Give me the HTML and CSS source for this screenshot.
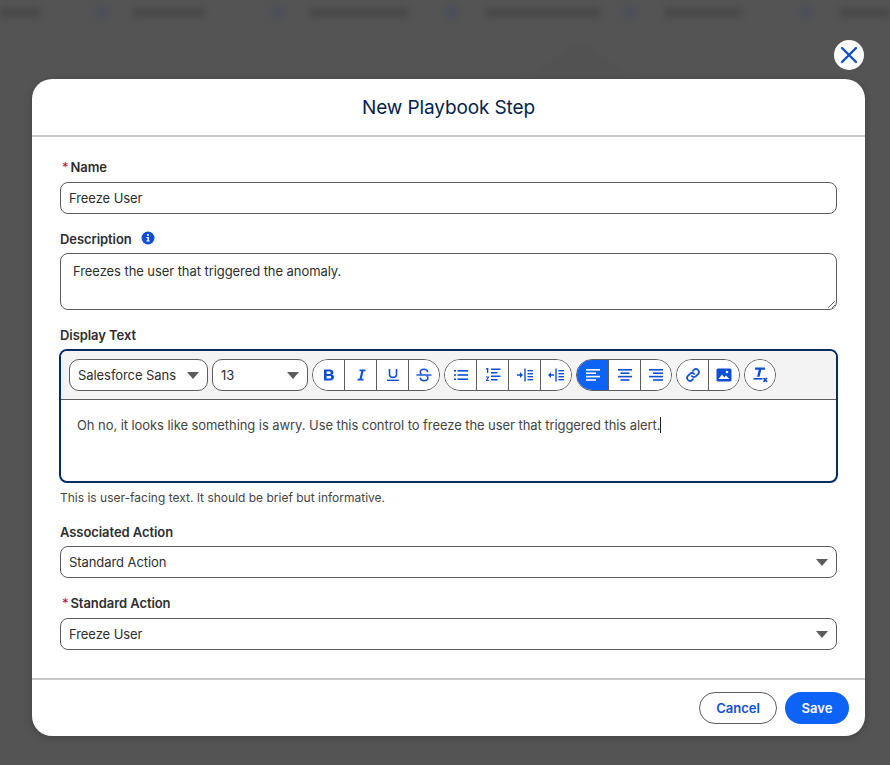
FILE: index.html
```html
<!DOCTYPE html>
<html lang="en">
<head>
    <meta charset="UTF-8">
    <meta name="viewport" content="width=device-width, initial-scale=1.0">
    <title>New Playbook Step</title>
    <link rel="stylesheet" href="styles.css">
</head>
<body>
    <!-- blurred page behind the modal -->
    <div class="backdrop-nav">
        <span class="nav-text nav-first"></span>
        <span class="nav-dot"></span><span class="nav-text nav-a"></span>
        <span class="nav-dot"></span><span class="nav-text nav-b"></span>
        <span class="nav-dot"></span><span class="nav-text nav-c"></span>
        <span class="nav-dot"></span><span class="nav-text nav-d"></span>
        <span class="nav-dot"></span><span class="nav-text nav-e"></span>
    </div>
    <div class="backdrop-shape"></div>

    <button class="close-btn" type="button" aria-label="Close">
        <svg width="18" height="18" viewBox="0 0 18 18"><path d="M2 2 L16 16 M16 2 L2 16" stroke="#0f4fd6" stroke-width="2.4" stroke-linecap="round" fill="none"/></svg>
    </button>

    <div class="modal">
        <header class="modal-header">
            <h1>New Playbook Step</h1>
        </header>

        <form class="modal-body">
            <div class="field">
                <label class="field-label required" for="name"><abbr>*</abbr>Name</label>
                <input class="text-input" type="text" id="name" value="Freeze User">
            </div>

            <div class="field">
                <label class="field-label" for="description">Description
                    <svg class="info-icon" width="14" height="14" viewBox="0 0 14 14"><circle cx="7" cy="7" r="6.5" fill="#0f4fd6"/><rect x="6" y="3" width="2" height="2" rx="1" fill="#fff"/><path d="M5.4 6h2.5v3.4h.8v1H5.4v-1h1V7h-1z" fill="#fff"/></svg>
                </label>
                <textarea class="text-area" id="description">Freezes the user that triggered the anomaly.</textarea>
            </div>

            <div class="field field-help">
                <label class="field-label">Display Text</label>
                <div class="editor">
                    <div class="toolbar">
                        <div class="select-wrap font-select">
                            <select class="tool-select"><option>Salesforce Sans</option></select>
                        </div>
                        <div class="select-wrap size-select">
                            <select class="tool-select"><option>13</option></select>
                        </div>

                        <div class="btn-group">
                            <button type="button" class="tool-btn"><svg width="14" height="14" viewBox="0 0 14 14"><path fill-rule="evenodd" d="M2 1.500h5.800c2.200 0 3.600 1.100 3.600 2.900 0 1-.5 1.800-1.400 2.200 1.200.4 2 1.300 2 2.600 0 1.900-1.500 3.300-3.800 3.300H2zM4.600 3.500v2.600h2.800c.8 0 1.300-.5 1.300-1.300s-.5-1.300-1.300-1.300zM4.600 8v2.600h3.200c.9 0 1.400-.5 1.400-1.300S8.700 8 7.800 8z" fill="#0f4fd6"/></svg></button>
                            <button type="button" class="tool-btn"><svg width="14" height="14" viewBox="0 0 14 14"><path d="M5.500 1.500h6v1.800H9.500L7.700 10.700h1.900v1.800H3.500V10.700h2L7.300 3.300H5.500z" fill="#0f4fd6"/></svg></button>
                            <button type="button" class="tool-btn"><svg width="14" height="14" viewBox="0 0 14 14"><path d="M3.500 1v5.200c0 2 1.500 3.200 3.500 3.200s3.500-1.200 3.500-3.200V1" stroke="#0f4fd6" stroke-width="1.600" fill="none"/><rect x="1" y="11.600" width="12" height="1.400" fill="#0f4fd6"/></svg></button>
                            <button type="button" class="tool-btn"><svg width="16" height="16" viewBox="0 0 16 16"><path d="M11.800 5.200C11.500 3.200 10 2.300 8 2.300S4.300 3.400 4.300 5.200c0 1 .5 1.700 1.300 2.100M10.700 8.700c.8.500 1.200 1.200 1.200 2.100 0 1.900-1.700 2.900-3.900 2.900s-3.600-1-3.900-3" stroke="#0f4fd6" stroke-width="1.500" fill="none"/><rect x="0.500" y="7.300" width="15" height="1.400" fill="#0f4fd6"/></svg></button>
                        </div>

                        <div class="btn-group">
                            <button type="button" class="tool-btn"><svg width="16" height="14" viewBox="0 0 16 14"><g fill="#0f4fd6"><rect x="1" y="2" width="2" height="1.600"/><rect x="1" y="6.200" width="2" height="1.600"/><rect x="1" y="10.400" width="2" height="1.600"/><rect x="4.500" y="2" width="10.500" height="1.600"/><rect x="4.500" y="6.200" width="10.500" height="1.600"/><rect x="4.500" y="10.400" width="10.500" height="1.600"/></g></svg></button>
                            <button type="button" class="tool-btn"><svg width="16" height="16" viewBox="0 0 16 16"><g fill="#0f4fd6"><path d="M2 1h1.300v5H2V2.400H1V1.600z"/><path d="M1 9.500h3v1.100L2.300 13H4v1H1v-1l1.800-2.400H1z"/><rect x="6" y="1.500" width="9.500" height="1.500"/><rect x="6" y="5" width="6.500" height="1.500"/><rect x="6" y="8.500" width="9.500" height="1.500"/><rect x="6" y="12" width="6.500" height="1.500"/></g></svg></button>
                            <button type="button" class="tool-btn"><svg width="18" height="14" viewBox="0 0 18 14"><g fill="#0f4fd6"><path d="M1 6.200h3V4l3 3-3 3V7.800H1z"/><rect x="8.300" y="0.500" width="1.400" height="13"/><rect x="11.500" y="2" width="5.500" height="1.400"/><rect x="11.500" y="5" width="5.500" height="1.400"/><rect x="11.500" y="8" width="5.500" height="1.400"/><rect x="11.500" y="11" width="5.500" height="1.400"/></g></svg></button>
                            <button type="button" class="tool-btn"><svg width="18" height="14" viewBox="0 0 18 14"><g fill="#0f4fd6"><path d="M7 6.200H4V4L1 7l3 3V7.800h3z"/><rect x="8.300" y="0.500" width="1.400" height="13"/><rect x="11.500" y="2" width="5.500" height="1.400"/><rect x="11.500" y="5" width="5.500" height="1.400"/><rect x="11.500" y="8" width="5.500" height="1.400"/><rect x="11.500" y="11" width="5.500" height="1.400"/></g></svg></button>
                        </div>

                        <div class="btn-group">
                            <button type="button" class="tool-btn is-active"><svg width="16" height="14" viewBox="0 0 16 14"><g fill="#fff"><rect x="1" y="1" width="14" height="1.600"/><rect x="1" y="4.400" width="10" height="1.600"/><rect x="1" y="7.800" width="14" height="1.600"/><rect x="1" y="11.200" width="10" height="1.600"/></g></svg></button>
                            <button type="button" class="tool-btn"><svg width="16" height="14" viewBox="0 0 16 14"><g fill="#0f4fd6"><rect x="1" y="1" width="14" height="1.600"/><rect x="3.500" y="4.400" width="9" height="1.600"/><rect x="1" y="7.800" width="14" height="1.600"/><rect x="3.500" y="11.200" width="9" height="1.600"/></g></svg></button>
                            <button type="button" class="tool-btn"><svg width="16" height="14" viewBox="0 0 16 14"><g fill="#0f4fd6"><rect x="1" y="1" width="14" height="1.600"/><rect x="5" y="4.400" width="10" height="1.600"/><rect x="1" y="7.800" width="14" height="1.600"/><rect x="5" y="11.200" width="10" height="1.600"/></g></svg></button>
                        </div>

                        <div class="btn-group">
                            <button type="button" class="tool-btn"><svg width="16" height="16" viewBox="0 0 16 16"><g stroke="#0f4fd6" stroke-width="1.700" fill="none" stroke-linecap="round"><path d="M6.800 9.200a2.900 2.900 0 0 0 4.200 0l2.300-2.300a3 3 0 0 0-4.200-4.200L8 3.800"/><path d="M9.200 6.800a2.900 2.900 0 0 0-4.200 0L2.700 9.100a3 3 0 0 0 4.200 4.200L8 12.200"/></g></svg></button>
                            <button type="button" class="tool-btn"><svg width="16" height="14" viewBox="0 0 16 14"><rect x="0.500" y="0.500" width="15" height="13" rx="1.500" fill="#0f4fd6"/><path d="M2.500 11l3.500-4.500 2.300 2.700 1.700-1.800 3.500 3.600z" fill="#fff"/><circle cx="11" cy="4" r="1.300" fill="#fff"/></svg></button>
                        </div>

                        <div class="btn-group">
                            <button type="button" class="tool-btn"><svg width="18" height="18" viewBox="0 0 18 18"><g fill="#0f4fd6"><path d="M4 1.500h10v2.200h-3.800L8.600 10.800H6.100L7.700 3.700H4z"/><rect x="2.500" y="12" width="9" height="1.600"/></g><path d="M12.500 12l3.500 3.800M16 12l-3.500 3.800" stroke="#0f4fd6" stroke-width="1.700" fill="none"/></svg></button>
                        </div>
                    </div>
                    <div class="editor-body">
                        <p>Oh no, it looks like something is awry. Use this control to freeze the user that triggered this alert.<span class="caret"></span></p>
                    </div>
                </div>
                <div class="help-text">This is user-facing text. It should be brief but informative.</div>
            </div>

            <div class="field">
                <label class="field-label" for="action">Associated Action</label>
                <div class="select-wrap">
                    <select class="text-input" id="action"><option>Standard Action</option></select>
                </div>
            </div>

            <div class="field">
                <label class="field-label required" for="standard"><abbr>*</abbr>Standard Action</label>
                <div class="select-wrap">
                    <select class="text-input" id="standard"><option>Freeze User</option></select>
                </div>
            </div>
        </form>

        <footer class="modal-footer">
            <button type="button" class="btn btn-neutral">Cancel</button>
            <button type="button" class="btn btn-brand">Save</button>
        </footer>
    </div>
</body>
</html>
```

FILE: styles.css
```css
* {
    box-sizing: border-box;
}

body {
    margin: 0;
    height: 765px;
    overflow: hidden;
    position: relative;
    background: #545454;
    font-family: Inter, "Liberation Sans", sans-serif;
    font-size: 13px;
    letter-spacing: -0.07px;
    color: #2b2826;
    padding-top: 79px;
}

/* page behind the overlay */
.backdrop-nav {
    position: absolute;
    top: 6px;
    left: 0;
    right: 0;
    height: 12px;
    display: flex;
    align-items: center;
    filter: blur(3px);
}

.nav-text {
    height: 9px;
    background: #484848;
}

.nav-dot {
    width: 14px;
    height: 14px;
    border-radius: 50%;
    background: #4b4f59;
}

.nav-first { width: 40px; margin-right: 55px; }
.nav-a { width: 72px; margin-left: 24px; margin-right: 66px; }
.nav-b { width: 98px; margin-left: 25px; margin-right: 37px; }
.nav-c { width: 114px; margin-left: 27px; margin-right: 23px; }
.nav-d { width: 77px; margin-left: 28px; margin-right: 58px; }
.nav-e { width: 50px; margin-left: 26px; }

.backdrop-shape {
    position: absolute;
    left: 525px;
    top: 40px;
    width: 110px;
    height: 40px;
    background: #525252;
    clip-path: polygon(50% 0, 100% 100%, 0 100%);
    filter: blur(5px);
}

.close-btn {
    position: absolute;
    left: 834px;
    top: 40px;
    width: 30px;
    height: 30px;
    border: 0;
    border-radius: 50%;
    background: #fff;
    padding: 0;
    display: flex;
    align-items: center;
    justify-content: center;
}

.modal {
    position: relative;
    margin-left: 32px;
    width: 833px;
    height: 657px;
    background: #fff;
    border-radius: 20px;
    display: flex;
    flex-direction: column;
    box-shadow: 0 2px 8px rgba(0, 0, 0, 0.2);
    overflow: hidden;
}

.modal-header {
    height: 58px;
    border-bottom: 2px solid #c9c9c9;
    padding-top: 1px;
    display: flex;
    align-items: center;
    justify-content: center;
}

.modal-header h1 {
    margin: 0;
    font-size: 19px;
    font-weight: 400;
    letter-spacing: -0.12px;
    color: #03234d;
}

.modal-body {
    flex: 1;
    padding: 21px 28px 0;
}

.field {
    margin-bottom: 16px;
}

.field-help {
    margin-bottom: 18px;
}

.field-label {
    display: flex;
    align-items: center;
    height: 18px;
    margin-bottom: 5px;
    font-size: 13px;
    font-weight: 600;
    color: #2e2e2e;
}

.field-label.required {
    height: 19px;
    padding-bottom: 2px;
}

.field-label abbr {
    color: #ba0f4a;
    margin: 0 2px 0 2px;
    font-weight: 400;
}

.info-icon {
    margin-left: 9px;
    margin-top: -2px;
}

.text-input,
.text-area {
    display: block;
    width: 100%;
    border: 1px solid #5c5c5c;
    border-radius: 8px;
    background: #fff;
    font-family: inherit;
    font-size: 13px;
    letter-spacing: inherit;
    color: #2e2e2e;
    outline: none;
}

.text-input {
    height: 32px;
    padding: 0 8px;
    appearance: none;
}

.text-area {
    height: 57px;
    padding: 7px 12px;
    line-height: 20px;
    resize: vertical;
}

.select-wrap {
    position: relative;
}

.select-wrap::after {
    content: "";
    position: absolute;
    right: 9px;
    top: 13px;
    border-left: 6px solid transparent;
    border-right: 6px solid transparent;
    border-top: 7px solid #5c5c5c;
    pointer-events: none;
}

.editor {
    height: 134px;
    margin: 0 -1px;
    border: 2px solid #032d60;
    border-radius: 8px;
    overflow: hidden;
}

.toolbar {
    height: 49px;
    padding: 8px;
    display: flex;
    gap: 4px;
    background: #f3f3f3;
    border-bottom: 1px solid #5c5c5c;
}

.font-select { width: 139px; }
.size-select { width: 96px; }

.tool-select {
    display: block;
    width: 100%;
    height: 32px;
    padding: 0 8px;
    border: 1px solid #5c5c5c;
    border-radius: 10px;
    background: #fff;
    font-family: inherit;
    font-size: 13px;
    letter-spacing: inherit;
    color: #2e2e2e;
    appearance: none;
    outline: none;
}

.btn-group {
    display: flex;
    height: 32px;
    border: 1px solid #5c5c5c;
    border-radius: 16px;
    background: #fff;
    overflow: hidden;
}

.tool-btn {
    width: 32px;
    height: 30px;
    padding: 0;
    border: 0;
    border-left: 1px solid #5c5c5c;
    background: #fff;
    display: flex;
    align-items: center;
    justify-content: center;
}

.tool-btn:first-child {
    border-left: 0;
    width: 31px;
}

.tool-btn:last-child {
    width: 31px;
}

.tool-btn:only-child {
    width: 30px;
}

.tool-btn.is-active {
    background: #0d63f5;
}

.editor-body {
    padding: 16px;
    background: #fff;
}

.editor-body p {
    margin: 0;
    line-height: 18px;
    color: #444;
}

.caret {
    display: inline-block;
    width: 1px;
    height: 16px;
    background: #222;
    vertical-align: -3px;
}

.help-text {
    margin-top: 8px;
    font-size: 12px;
    line-height: 14px;
    letter-spacing: 0;
    color: #444;
}

.modal-footer {
    height: 58px;
    border-top: 2px solid #c9c9c9;
    padding: 12px 16px;
    display: flex;
    justify-content: flex-end;
    gap: 8px;
}

.btn {
    height: 32px;
    border-radius: 16px;
    font-family: inherit;
    font-size: 13px;
    font-weight: 600;
    padding: 0;
}

.btn-neutral {
    width: 78px;
    border: 1px solid #5c5c5c;
    background: #fff;
    color: #0f4fd6;
}

.btn-brand {
    width: 64px;
    border: 0;
    background: #0d63f5;
    color: #fff;
}
```
